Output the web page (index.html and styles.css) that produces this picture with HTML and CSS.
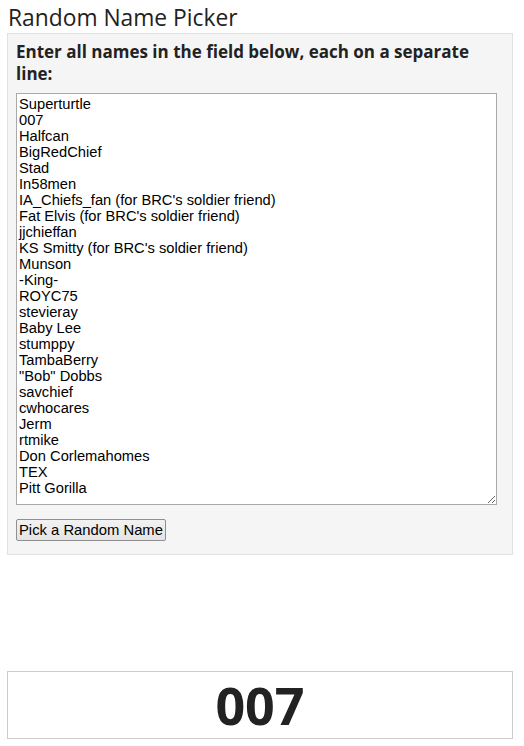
FILE: index.html
```html
<!DOCTYPE html>
<html lang="en">
<head>
    <meta charset="UTF-8">
    <meta name="viewport" content="width=device-width, initial-scale=1.0">
    <title>Random Name Picker</title>
    <link rel="stylesheet" href="styles.css">
</head>
<body>
    <h1>Random Name Picker</h1>
    <div class="panel">
        <label for="nomes">Enter all names in the field below, each on a separate line:</label>
        <textarea id="nomes">Superturtle
007
Halfcan
BigRedChief
Stad
In58men
IA_Chiefs_fan (for BRC's soldier friend)
Fat Elvis (for BRC's soldier friend)
jjchieffan
KS Smitty (for BRC's soldier friend)
Munson
-King-
ROYC75
stevieray
Baby Lee
stumppy
TambaBerry
"Bob" Dobbs
savchief
cwhocares
Jerm
rtmike
Don Corlemahomes
TEX
Pitt Gorilla</textarea>
        <button type="button" id="sortear">Pick a Random Name</button>
    </div>
    <div class="resultado" id="resultado">007</div>
</body>
</html>
```

FILE: styles.css
```css
body {
    font-family: "Open Sans", sans-serif;
    color: #222;
    margin: 0;
    padding: 0 11px 0 7px;
}
h1 {
    font-size: 22.8px;
    font-weight: normal;
    margin: 0;
    padding: 2px 0 0 1px;
    line-height: 31px;
}
.panel {
    background-color: #f5f5f5;
    border: 1px solid #e1e1e1;
    padding: 7px 8px 13px 8px;
}
label {
    display: block;
    font-weight: bold;
    font-size: 17px;
    line-height: 22px;
    margin-bottom: 8px;
}
textarea {
    display: block;
    box-sizing: border-box;
    width: 481px;
    height: 412px;
    padding: 2px;
    border: 1px solid #a9a9a9;
    font-family: "Liberation Sans", Arial, sans-serif;
    font-size: 14.7px;
    line-height: 16px;
    color: #000;
    resize: vertical;
}
button {
    margin-top: 14px;
    font-family: "Liberation Sans", Arial, sans-serif;
    font-size: 14.8px;
    padding: 1px 2px;
    line-height: 18px;
    color: #000;
    background: linear-gradient(#f2f2f2, #e4e4e4);
    border: 1px solid #8f8f8f;
    border-radius: 2px;
}
.resultado {
    margin-top: 116px;
    border: 1px solid #ccc;
    background: white;
    text-align: center;
    font-weight: bold;
    font-size: 52px;
    line-height: 66px;
}
```
